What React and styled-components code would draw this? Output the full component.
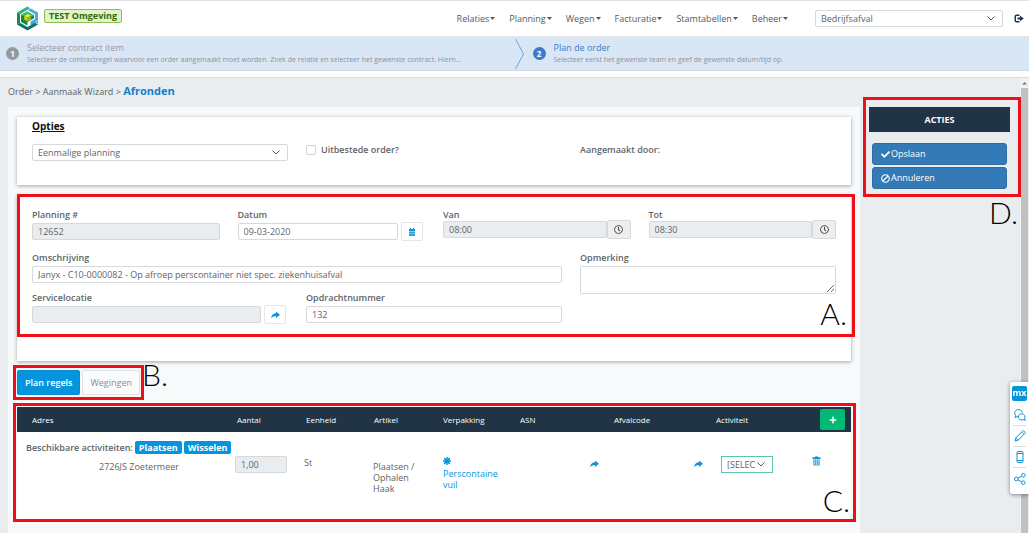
import React from "react";
import styled, { createGlobalStyle } from "styled-components";
import { FaCheck, FaBan, FaPlus, FaRegClock } from "react-icons/fa";

const GlobalStyle = createGlobalStyle`
  * {
    box-sizing: border-box;
  }
  body {
    margin: 0;
    background: #fff;
  }
  body, button, input, select, textarea {
    font-family: "Open Sans", "Noto Sans", sans-serif;
    font-size: 9px;
    line-height: 12px;
    color: #606468;
  }
  svg {
    display: block;
    flex: none;
  }
`;

const Page = styled.div`
  display: flex;
  flex-direction: column;
  height: 100vh;
  overflow: hidden;
  border-top: 1px solid #e2e3e8;
`;

const Header = styled.header`
  display: flex;
  align-items: center;
  flex: none;
  height: 36px;
  padding: 0 5px 0 16px;
  border-bottom: 1px solid #e6e8ea;
`;

const EnvBadge = styled.span`
  align-self: flex-start;
  margin: 8px auto 0 5px;
  padding: 0 4px;
  border: 1px solid #8cbd57;
  border-radius: 2px;
  background: #e3f3c9;
  color: #2e6b0c;
  font-weight: 700;
  line-height: 12px;
`;

const Nav = styled.nav`
  display: flex;
  gap: 14px;
  margin-right: 27px;
`;

const NavLink = styled.a`
  display: flex;
  align-items: center;
  color: #555a5f;
  text-decoration: none;
  gap: 1px;
`;

const SelectWrap = styled.span`
  position: relative;
  display: block;
  width: ${(p) => p.$width || "100%"};
  margin: ${(p) => p.$margin || "0"};

  svg {
    position: absolute;
    right: 8px;
    top: 6px;
    pointer-events: none;
  }
`;

const SelectBox = styled.select`
  display: block;
  width: 100%;
  height: 17px;
  padding: 0 5px;
  border: 1px solid ${(p) => (p.$green ? "#5bc8a0" : "#d6d8da")};
  border-radius: ${(p) => (p.$green ? "0" : "2px")};
  background: #fff;
  appearance: none;
`;

const LogoutButton = styled.button`
  margin-left: 11px;
  padding: 0;
  border: 0;
  background: none;
  color: #1f3447;
`;

const Stepper = styled.ol`
  display: flex;
  flex: none;
  height: 34px;
  margin: 0 0 6px;
  padding: 0;
  list-style: none;
  background: #d9e6f5;
  border-bottom: 1px solid #d3dbe4;
`;

const Step = styled.li`
  display: flex;
  flex: 1;
  align-items: center;
  min-width: 0;
  color: ${(p) => (p.$active ? "#3c7bcb" : "#96999d")};
`;

const StepNumber = styled.span`
  flex: none;
  width: 13px;
  height: 13px;
  margin: 0 8px 0 ${(p) => (p.$active ? "9px" : "6px")};
  border-radius: 50%;
  background: ${(p) => (p.$active ? "#3c7bcb" : "#96999a")};
  color: #fff;
  font-size: 8px;
  font-weight: 700;
  line-height: 13px;
  text-align: center;
`;

const StepText = styled.div`
  min-width: 0;
  white-space: nowrap;
`;

const StepInfo = styled.div`
  color: #8f9296;
  font-size: 7px;
`;

const Workspace = styled.div`
  display: flex;
  flex: 1;
  min-height: 0;
  border-top: 1px solid #d9dde0;
  background: #e9edf0;
`;

const Main = styled.main`
  display: flex;
  flex-direction: column;
  flex: 1;
  min-width: 0;
  padding-left: 8px;
`;

const Breadcrumb = styled.div`
  height: 29px;
  line-height: 26px;

  strong {
    color: #1580cb;
    font-size: 11px;
  }
`;

const Panel = styled.div`
  flex: 1;
  padding: 10px 9px 0;
  background: #f8f9fb;
`;

const Card = styled.section`
  position: relative;
  min-height: ${(p) => p.$height};
  margin-bottom: ${(p) => p.$below};
  padding: ${(p) => p.$top} 15px 0;
  background: #fff;
  box-shadow: 0 1px 4px rgba(0, 0, 0, 0.35);
`;

const Frame = styled.div`
  position: absolute;
  inset: ${(p) => p.$inset};
  border: 3px solid #f00f17;
  pointer-events: none;
`;

const Mark = styled.span`
  position: absolute;
  right: ${(p) => p.$right};
  bottom: ${(p) => p.$bottom};
  color: #000;
  font-family: Lato, sans-serif;
  font-size: 30px;
  font-weight: 300;
  line-height: 30px;
`;

const CardTitle = styled.h2`
  margin: 0 0 11px;
  color: #111;
  font-size: 10px;
  line-height: 14px;
  text-decoration: underline;
`;

const Grid = styled.div`
  display: grid;
  grid-template-columns: repeat(12, minmax(0, 1fr));
  gap: 9px 18px;
  margin-bottom: ${(p) => p.$below || "0"};
`;

const Field = styled.div`
  display: flex;
  flex-direction: column;
  gap: ${(p) => (p.$tight ? "0" : "2px")};
  grid-column: span ${(p) => p.$span};
  grid-row: span ${(p) => p.$rows || 1};
`;

const Label = styled.label`
  font-weight: 600;
`;

const InputRow = styled.div`
  display: flex;
  align-items: center;
  gap: ${(p) => (p.$joined ? "0" : "3px")};
  padding-right: ${(p) => p.$end || "0"};
`;

const TextInput = styled.input`
  flex: ${(p) => (p.$fixed ? "none" : "1")};
  min-width: 0;
  width: ${(p) => p.$fixed || "100%"};
  height: 17px;
  padding: 0 5px;
  border: 1px solid #d6d8da;
  border-radius: 2px;
  background: ${(p) => (p.readOnly ? "#e9edf0" : "#fff")};
`;

const TextArea = styled.textarea`
  display: block;
  width: 100%;
  height: 28px;
  border: 1px solid #d6d8da;
  border-radius: 2px;
`;

const Checkbox = styled.input`
  width: 10px;
  height: 10px;
  margin: 0 5px 0 0;
  border: 1px solid #d0d3d5;
  border-radius: 2px;
  appearance: none;
`;

const CheckLabel = styled(Label)`
  display: flex;
  align-items: center;
  align-self: start;
  grid-column: span 4;
`;

const IconButton = styled.button`
  display: flex;
  flex: none;
  align-items: center;
  justify-content: center;
  width: ${(p) => (p.$grey ? "24px" : "22px")};
  height: 19px;
  margin: -1px 0;
  padding: 0;
  border: 1px solid ${(p) => (p.$grey ? "#d6d8da" : "#e4e6e8")};
  border-radius: 2px;
  background: ${(p) => (p.$grey ? "#eee" : "#fff")};
  color: ${(p) => (p.$grey ? "#444" : "#0a94dc")};
`;

const TabRow = styled.div`
  position: relative;
  display: flex;
  gap: 2px;
  width: fit-content;
  margin-bottom: 12px;
`;

const Tab = styled.button`
  height: 25px;
  padding: 0 7px;
  border: 1px solid ${(p) => (p.$active ? "#0a8ad2" : "#dfe2e4")};
  border-radius: 2px;
  background: ${(p) => (p.$active ? "#0595de" : "#fafbfc")};
  color: ${(p) => (p.$active ? "#fff" : "#8c8f92")};
  font-weight: ${(p) => (p.$active ? 600 : 400)};
`;

const Lines = styled.div`
  position: relative;
  height: 111px;
  background: #fff;
`;

const Table = styled.table`
  width: 100%;
  table-layout: fixed;
  border-collapse: collapse;

  th {
    height: 25px;
    padding: 0 0 0 8px;
    background: #203445;
    color: #fff;
    font-size: 8px;
    font-weight: 400;
    text-align: left;
  }
  th:first-child {
    padding-left: 15px;
  }
  td {
    padding: 2px 0 0 6px;
    vertical-align: top;
  }
  td:nth-child(9) {
    padding-left: 0;
  }
`;

const Activities = styled.div`
  display: flex;
  align-items: center;
  gap: 2px;
  padding: 7px 0 0 3px;
  font-weight: 600;
`;

const ActivityTag = styled.span`
  padding: 0 4px;
  border-radius: 2px;
  background: #0595de;
  color: #fff;
  font-weight: 700;
  line-height: 13px;
`;

const CellText = styled.div`
  padding: ${(p) => p.$pad || "0"};
  line-height: 11px;
`;

const PackLink = styled.a`
  display: block;
  padding: 1px 0 0 2px;
  color: #0a94dc;
  line-height: 11px;
  text-decoration: none;

  svg {
    margin-bottom: 3px;
  }
`;

const PlainButton = styled.button`
  display: block;
  margin: ${(p) => p.$margin || "0"};
  padding: 0;
  border: 0;
  background: none;
  color: #0a94dc;
`;

const AddButton = styled.button`
  display: flex;
  align-items: center;
  justify-content: center;
  width: 25px;
  height: 21px;
  padding: 0;
  border: 0;
  border-radius: 2px;
  background: #02b875;
  color: #fff;
`;

const Aside = styled.aside`
  flex: none;
  width: 160px;
  padding: 29px 10px 0 9px;
`;

const AsideBox = styled.div`
  position: relative;
`;

const AsideTitle = styled.h2`
  margin: 0 0 11px;
  background: #203445;
  color: #fff;
  font-size: 9px;
  line-height: 25px;
  text-align: center;
`;

const ActionButton = styled.button`
  display: flex;
  align-items: center;
  gap: 1px;
  width: calc(100% - 6px);
  height: 22px;
  margin: 0 3px 2px;
  padding: 0 8px;
  border: 1px solid #2e6da4;
  border-radius: 3px;
  background: #337ab7;
  color: #fff;
`;

const Scrollbar = styled.div`
  flex: none;
  width: 9px;
  padding: 3px 1px 0;
  background: #f1f1f1;
  color: #777;
`;

const Thumb = styled.div`
  height: 100%;
  margin-top: 3px;
  background: #c1c1c1;
`;

const Feedback = styled.div`
  position: fixed;
  top: 382px;
  right: 0;
  display: flex;
  flex-direction: column;
  align-items: center;
  width: 19px;
  padding: 4px 0 5px;
  border-radius: 3px 0 0 3px;
  background: #fff;
  box-shadow: 0 1px 4px rgba(0, 0, 0, 0.45);
`;

const MxLogo = styled.span`
  width: 15px;
  height: 15px;
  margin-bottom: 4px;
  border-radius: 2px;
  background: #0595db;
  color: #fff;
  font-size: 9px;
  font-weight: 700;
  line-height: 13px;
  text-align: center;
`;

const FeedbackButton = styled.button`
  display: flex;
  align-items: center;
  justify-content: center;
  width: 13px;
  height: 21px;
  padding: 0;
  border: 0;
  border-bottom: 1px solid #dcdee0;
  background: none;
  color: #0a94dc;

  &:last-child {
    border-bottom: 0;
  }
`;

const Logo = () => (
  <svg width="23" height="25" viewBox="0 0 23 25">
    <path d="M11.5 0.5 L1 6.5 V18.5 L11.5 24.5 L22 18.5 V6.5Z" fill="#fff" />
    <path d="M11.5 0.5 L1 6.5 L4 8.2 L14.2 2.2Z" fill="#2fb38a" />
    <path d="M1 6.5 L4 8.2 V16.8 L1 18.5Z" fill="#17884a" />
    <path d="M1 18.5 L4 16.8 L11.5 21 L19 16.8 L22 18.5 L11.5 24.5Z" fill="#0a7562" />
    <path d="M14.8 2.5 L22 6.5 V14.5 L14.5 18.8 V15.5 L19 13 V8.3 L11.8 4.3Z" fill="#45ade6" />
    <path d="M5 9 L11 5.6 L18 9.3 V12.3 L14.5 14.2 L11.5 16 V19.5 L5 16Z" fill="#128a3e" />
    <path d="M5 9 L11 5.6 L18 9.3 L16 10.4 L11 7.7 L7 10Z" fill="#4cba6a" />
    <path d="M14.5 19.3 L22 15.2 V17.5 L19 16 L14.5 18.6Z" fill="#2a78c0" />
    <path d="M8.2 9.7 L11.5 7.9 L15 9.7 L11.5 11.5Z" fill="#f1ea3a" />
    <path d="M8.2 9.7 L11.5 11.5 V15.5 L8.2 13.5Z" fill="#c8d420" />
    <path d="M15 9.7 L11.5 11.5 V15.5 L15 13.5Z" fill="#98b81c" />
  </svg>
);

const Caret = () => (
  <svg width="5" height="3" viewBox="0 0 5 3" fill="currentColor">
    <path d="M0 0 H5 L2.5 3Z" />
  </svg>
);

const Chevron = () => (
  <svg width="8" height="5" viewBox="0 0 8 5" fill="none" stroke="#555" strokeWidth="1">
    <path d="M0.5 0.5 L4 4 L7.5 0.5" />
  </svg>
);

const StepArrow = () => (
  <svg width="9" height="30" viewBox="0 0 9 30" fill="none" stroke="#6fa3dd">
    <path d="M0.5 0 L8.5 15 L0.5 30" />
  </svg>
);

const LogoutIcon = () => (
  <svg width="10" height="9" viewBox="0 0 10 9" fill="currentColor">
    <path d="M5.5 0.5 H2.5 Q0.5 0.5 0.5 2.5 V6.5 Q0.5 8.5 2.5 8.5 H5.5 V7 H2.5 Q2 7 2 6.5 V2.5 Q2 2 2.5 2 H5.5Z" />
    <path d="M6 1.8 L9.8 4.5 L6 7.2 V5.5 H3.5 V3.5 H6Z" />
  </svg>
);

const ShareArrow = () => (
  <svg width="9" height="8" viewBox="0 0 9 8" fill="currentColor">
    <path d="M5 0.5 L9 3.7 L5 7 V5.2 C3 5.2 1.5 5.5 0 7 C0.5 4 2.5 2.4 5 2.3Z" />
  </svg>
);

const CalendarIcon = () => (
  <svg width="8" height="8" viewBox="0 0 8 8" fill="currentColor">
    <path d="M1 1 H2 V0 H3 V1 H5 V0 H6 V1 H7 V3 H1Z" />
    <path d="M1 3 H7 V8 H1Z" opacity="0.85" />
    <path d="M1 3 H7 V3.7 H1Z M1 5.2 H7 V5.8 H1Z" fill="#fff" opacity="0.6" />
  </svg>
);

const TrashIcon = () => (
  <svg width="9" height="10" viewBox="0 0 9 10" fill="currentColor">
    <path d="M3 0.5 H6 V1.3 H8.5 V3 H0.5 V1.3 H3Z" />
    <path d="M1.2 3.5 H7.8 V9.5 H1.2Z" opacity="0.8" />
    <path d="M2.6 4 V9 M4.5 4 V9 M6.4 4 V9" stroke="#fff" strokeWidth="0.5" />
  </svg>
);

const AsteriskIcon = () => (
  <svg width="8" height="8" viewBox="0 0 8 8" stroke="currentColor" strokeWidth="1.5">
    <path d="M4 0 V8 M0 4 H8 M1.1 1.1 L6.9 6.9 M6.9 1.1 L1.1 6.9" />
  </svg>
);

const ScrollArrow = () => (
  <svg width="7" height="4" viewBox="0 0 7 4" fill="currentColor">
    <path d="M1 3.5 L3.5 1 L6 3.5Z" />
  </svg>
);

const feedbackIcons = {
  Reacties: (
    <>
      <path d="M4.2 7.3 L1 8.5 L1.7 6.3 A3.8 3.5 0 1 1 8.3 3.6" />
      <path d="M10.5 9.5 L11.5 11.3 L9.3 10.6 A3.3 3.1 0 1 1 10.5 9.5Z" />
    </>
  ),
  Bewerken: (
    <path d="M1 11 L1.8 7.8 L8.7 1 Q9.6 0.5 10.5 1.5 Q11.5 2.4 11 3.3 L4.2 10.2Z M7.6 2.1 L9.9 4.4 M1.8 7.8 L4.2 10.2" />
  ),
  Mobiel: (
    <path d="M3 1.5 Q3 0.5 4 0.5 H8 Q9 0.5 9 1.5 V10.5 Q9 11.5 8 11.5 H4 Q3 11.5 3 10.5Z M3 2.5 H9 M3 9.5 H9" />
  ),
  Delen: (
    <>
      <circle cx="2.3" cy="6" r="1.8" />
      <circle cx="9.3" cy="2.3" r="1.8" />
      <circle cx="9.3" cy="9.7" r="1.8" />
      <path d="M3.9 5.2 L7.7 3.1 M3.9 6.8 L7.7 8.9" />
    </>
  ),
};

const menu = ["Relaties", "Planning", "Wegen", "Facturatie", "Stamtabellen", "Beheer"];

const columns = [
  ["Adres", 212],
  ["Aantal", 69],
  ["Eenheid", 68],
  ["Artikel", 69],
  ["Verpakking", 77],
  ["ASN", 94],
  ["Afvalcode", 102],
  ["Activiteit", 104],
];

function TimeField({ id, label, value }) {
  return (
    <Field $span={3} $tight>
      <Label htmlFor={id}>{label}</Label>
      <InputRow $joined>
        <TextInput id={id} defaultValue={value} readOnly />
        <IconButton $grey aria-label={`${label} kiezen`}>
          <FaRegClock size={9} />
        </IconButton>
      </InputRow>
    </Field>
  );
}

function OrderForm() {
  return (
    <>
      <Grid $below="12px">
        <Field $span={3}>
          <Label htmlFor="planning">Planning #</Label>
          <TextInput $fixed="100%" id="planning" defaultValue="12652" readOnly />
        </Field>
        <Field $span={3}>
          <Label htmlFor="datum">Datum</Label>
          <InputRow $end="2px">
            <TextInput id="datum" defaultValue="09-03-2020" />
            <IconButton aria-label="Datum kiezen">
              <CalendarIcon />
            </IconButton>
          </InputRow>
        </Field>
        <TimeField id="van" label="Van" value="08:00" />
        <TimeField id="tot" label="Tot" value="08:30" />
      </Grid>
      <Grid>
        <Field $span={8}>
          <Label htmlFor="omschrijving">Omschrijving</Label>
          <TextInput
            $fixed="100%"
            id="omschrijving"
            defaultValue="Janyx - C10-0000082 - Op afroep perscontainer niet spec. ziekenhuisafval"
          />
        </Field>
        <Field $span={4} $rows={2}>
          <Label htmlFor="opmerking">Opmerking</Label>
          <TextArea id="opmerking" />
        </Field>
        <Field $span={4}>
          <Label htmlFor="servicelocatie">Servicelocatie</Label>
          <InputRow $end="2px">
            <TextInput id="servicelocatie" readOnly />
            <IconButton aria-label="Servicelocatie kiezen">
              <ShareArrow />
            </IconButton>
          </InputRow>
        </Field>
        <Field $span={4}>
          <Label htmlFor="opdrachtnummer">Opdrachtnummer</Label>
          <TextInput $fixed="100%" id="opdrachtnummer" defaultValue="132" />
        </Field>
      </Grid>
    </>
  );
}

function PlanLines() {
  return (
    <Table>
      <colgroup>
        {columns.map(([name, width]) => (
          <col key={name} style={{ width }} />
        ))}
        <col style={{ width: 39 }} />
      </colgroup>
      <thead>
        <tr>
          {columns.map(([name]) => (
            <th key={name}>{name}</th>
          ))}
          <th>
            <AddButton aria-label="Regel toevoegen">
              <FaPlus size={8} />
            </AddButton>
          </th>
        </tr>
      </thead>
      <tbody>
        <tr>
          <td colSpan={9}>
            <Activities>
              Beschikbare activiteiten:
              <ActivityTag>Plaatsen</ActivityTag>
              <ActivityTag>Wisselen</ActivityTag>
            </Activities>
          </td>
        </tr>
        <tr>
          <td>
            <CellText $pad="5px 0 0 76px">2726JS Zoetermeer</CellText>
          </td>
          <td>
            <TextInput $fixed="52px" aria-label="Aantal" defaultValue="1,00" readOnly />
          </td>
          <td>
            <CellText $pad="1px 0 0">St</CellText>
          </td>
          <td>
            <CellText $pad="5px 12px 0 1px">Plaatsen / Ophalen Haak</CellText>
          </td>
          <td>
            <PackLink href="#">
              <AsteriskIcon />
              Perscontaine
              <br />
              vuil
            </PackLink>
          </td>
          <td>
            <PlainButton $margin="4px 7px 0 auto" aria-label="ASN kiezen">
              <ShareArrow />
            </PlainButton>
          </td>
          <td>
            <PlainButton $margin="4px 5px 0 auto" aria-label="Afvalcode kiezen">
              <ShareArrow />
            </PlainButton>
          </td>
          <td>
            <SelectWrap $width="52px" $margin="0 7px">
              <SelectBox $green aria-label="Activiteit">
                <option>[SELEC</option>
              </SelectBox>
              <Chevron />
            </SelectWrap>
          </td>
          <td>
            <PlainButton aria-label="Verwijderen">
              <TrashIcon />
            </PlainButton>
          </td>
        </tr>
      </tbody>
    </Table>
  );
}

export default function App() {
  return (
    <Page>
      <GlobalStyle />
      <Header>
        <Logo />
        <EnvBadge>TEST Omgeving</EnvBadge>
        <Nav>
          {menu.map((item) => (
            <NavLink href="#" key={item}>
              {item}
              <Caret />
            </NavLink>
          ))}
        </Nav>
        <SelectWrap $width="188px">
          <SelectBox aria-label="Afdeling">
            <option>Bedrijfsafval</option>
          </SelectBox>
          <Chevron />
        </SelectWrap>
        <LogoutButton aria-label="Uitloggen">
          <LogoutIcon />
        </LogoutButton>
      </Header>
      <Stepper>
        <Step>
          <StepNumber>1</StepNumber>
          <StepText>
            <div>Selecteer contract item</div>
            <StepInfo>
              Selecteer de contractregel waarvoor een order aangemaakt moet worden. Zoek de relatie en selecteer het
              gewenste contract. Hiern...
            </StepInfo>
          </StepText>
        </Step>
        <Step $active>
          <StepArrow />
          <StepNumber $active>2</StepNumber>
          <StepText>
            <div>Plan de order</div>
            <StepInfo>Selecteer eerst het gewenste team en geef de gewenste datum/tijd op.</StepInfo>
          </StepText>
        </Step>
      </Stepper>
      <Workspace>
        <Main>
          <Breadcrumb>
            Order &gt; Aanmaak Wizard &gt; <strong>Afronden</strong>
          </Breadcrumb>
          <Panel>
            <Card $height="68px" $below="10px" $top="2px">
              <CardTitle>Opties</CardTitle>
              <Grid>
                <Field $span={4}>
                  <SelectWrap>
                    <SelectBox aria-label="Soort planning">
                      <option>Eenmalige planning</option>
                    </SelectBox>
                    <Chevron />
                  </SelectWrap>
                </Field>
                <CheckLabel>
                  <Checkbox type="checkbox" />
                  Uitbestede order?
                </CheckLabel>
                <Field $span={4}>
                  <Label as="span">Aangemaakt door:</Label>
                </Field>
              </Grid>
            </Card>
            <Card $height="166px" $below="9px" $top="14px">
              <OrderForm />
              <Frame $inset="-1px -4px 24px 0" />
              <Mark $right="4px" $bottom="33px">A.</Mark>
            </Card>
            <TabRow>
              <Tab $active>Plan regels</Tab>
              <Tab>Wegingen</Tab>
              <Frame $inset="-5px -4px -5px -4px" />
              <Mark $right="-28px" $bottom="6px">B.</Mark>
            </TabRow>
            <Lines>
              <PlanLines />
              <Frame $inset="-4px -5px -4px -4px" />
              <Mark $right="1px" $bottom="3px">C.</Mark>
            </Lines>
          </Panel>
        </Main>
        <Aside>
          <AsideBox>
            <AsideTitle>ACTIES</AsideTitle>
            <ActionButton>
              <FaCheck size={9} />
              Opslaan
            </ActionButton>
            <ActionButton>
              <FaBan size={9} transform="scale(-1 1)" />
              Annuleren
            </ActionButton>
            <Frame $inset="-10px -11px -8px -6px" />
            <Mark $right="-8px" $bottom="-38px">D.</Mark>
          </AsideBox>
        </Aside>
        <Scrollbar>
          <ScrollArrow />
          <Thumb />
        </Scrollbar>
      </Workspace>
      <Feedback>
        <MxLogo>mx</MxLogo>
        {Object.entries(feedbackIcons).map(([name, shape]) => (
          <FeedbackButton key={name} aria-label={name}>
            <svg width="12" height="12" viewBox="0 0 12 12" fill="none" stroke="currentColor">
              {shape}
            </svg>
          </FeedbackButton>
        ))}
      </Feedback>
    </Page>
  );
}
